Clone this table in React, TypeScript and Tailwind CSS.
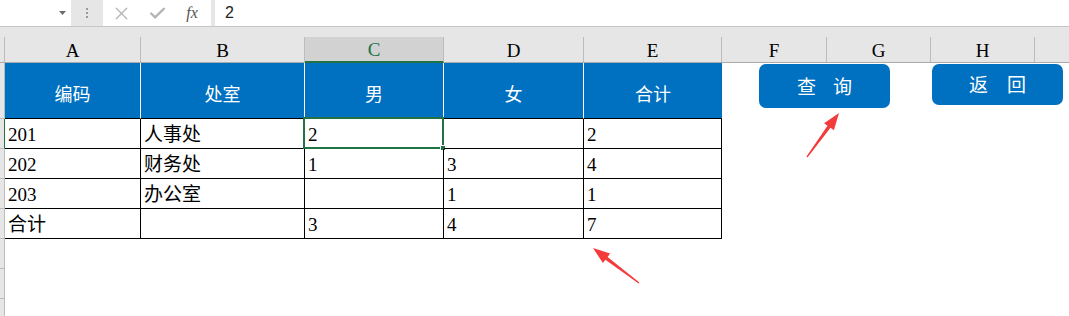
import React from 'react';
import { X, Check } from 'lucide-react';

const SERIF = "font-['Liberation_Serif','Noto_Sans_CJK_SC',serif]";

type Col = { key: string; w: string };

const COLS: Col[] = [
  { key: 'A', w: 'w-[136px]' },
  { key: 'B', w: 'w-[164px]' },
  { key: 'C', w: 'w-[139px]' },
  { key: 'D', w: 'w-[140px]' },
  { key: 'E', w: 'w-[138px]' },
  { key: 'F', w: 'w-[105px]' },
  { key: 'G', w: 'w-[104px]' },
  { key: 'H', w: 'w-[104px]' },
];

const HEAD = ['编码', '处室', '男', '女', '合计'];

const ROWS: string[][] = [
  ['201', '人事处', '2', '', '2'],
  ['202', '财务处', '1', '3', '4'],
  ['203', '办公室', '', '1', '1'],
  ['合计', '', '3', '4', '7'],
];

function FormulaBar() {
  return (
    <div className="flex h-[27px] bg-[#e6e6e6] border-b border-[#c6c6c6]">
      {/* name box */}
      <div className="w-[71px] bg-white flex items-center justify-end pr-[5px]">
        <svg width="7" height="4" viewBox="0 0 7 4">
          <path d="M0 0h7L3.5 4z" fill="#6b6b6b" />
        </svg>
      </div>
      <div className="w-[32px] flex flex-col items-center justify-center gap-[2px]">
        <span className="w-[2px] h-[2px] bg-[#9a9a9a]" />
        <span className="w-[2px] h-[2px] bg-[#9a9a9a]" />
        <span className="w-[2px] h-[2px] bg-[#9a9a9a]" />
      </div>
      <div className="w-[108px] bg-white flex items-center">
        <div className="w-[36px] flex justify-center">
          <X size={21} strokeWidth={1.5} color="#b4b4b4" />
        </div>
        <div className="w-[36px] flex justify-center">
          <Check size={19} strokeWidth={3} color="#b4b4b4" />
        </div>
        <div className="w-[36px] flex justify-center font-['Liberation_Serif',serif] italic text-[16px] text-[#555] pr-[2px]">
          fx
        </div>
      </div>
      <div className="w-[4px]" />
      <div className="flex-1 bg-white flex items-center pl-[10px] font-['Liberation_Sans',sans-serif] text-[16px] text-[#222]">
        2
      </div>
    </div>
  );
}

function ColumnHeader() {
  return (
    <div className={`flex h-[26px] bg-[#e6e6e6] border-b border-[#ababab] ${SERIF} text-[19px] text-black`}>
      <div className="w-[5px] border-r border-[#bcbcbc]" />
      {COLS.map((c) =>
        c.key === 'C' ? (
          <div
            key={c.key}
            className={`${c.w} flex items-center justify-center pt-[3px] bg-[#d2d2d2] text-[#217346] border-r border-[#bcbcbc] border-b-2 border-b-[#217346] -mb-px`}
          >
            {c.key}
          </div>
        ) : (
          <div key={c.key} className={`${c.w} flex items-center justify-center pt-[3px] border-r border-[#bcbcbc]`}>
            {c.key}
          </div>
        )
      )}
      <div className="flex-1" />
    </div>
  );
}

function Arrows() {
  return (
    <svg className="absolute left-0 top-0 pointer-events-none" width="1069" height="316" viewBox="0 0 1069 316">
      <polygon
        fill="#f43b3b"
        points="839,113 833.9,130.3 830.5,127.8 807.5,157.4 806.5,156.6 827.5,125.7 824.1,123.2"
      />
      <polygon
        fill="#f43b3b"
        points="593,248 610.1,253.5 607.6,256.9 639.4,282.5 638.6,283.5 605.4,259.7 602.9,263.1"
      />
    </svg>
  );
}

export default function App() {
  return (
    <div className="relative w-[1069px] h-[316px] overflow-hidden bg-white">
      <FormulaBar />
      <div className="h-[10px] bg-[#e6e6e6]" />
      <ColumnHeader />

      <div className="relative">
        {/* table header row */}
        <div className="flex h-[56px]">
          <div className="w-[5px] bg-[#e6e6e6] border-r border-b border-[#bcbcbc]" />
          {HEAD.map((h, i) => (
            <div
              key={h}
              className={`${COLS[i].w} bg-[#0070c0] border-b border-b-black ${i < 4 ? 'border-r border-r-white' : ''} flex items-center justify-center pt-[6px] font-['Noto_Sans_CJK_SC',sans-serif] text-[18px] text-white`}
            >
              {h}
            </div>
          ))}
        </div>

        {/* table body */}
        {ROWS.map((row, r) => (
          <div key={r} className="flex h-[30px]">
            <div
              className={`w-[5px] bg-[#e6e6e6] border-b border-[#bcbcbc] border-r ${r === 0 ? 'border-r-[#217346]' : 'border-r-[#bcbcbc]'}`}
            />
            {row.map((v, i) => (
              <div
                key={i}
                className={`${COLS[i].w} relative border-r border-b border-black flex items-end px-[3px] pb-[2px] leading-[22px] ${SERIF} text-[19px] text-black`}
              >
                {v}
                {r === 0 && i === 2 && (
                  <>
                    <div className="absolute -left-[2px] -top-[2px] -right-px -bottom-px border-2 border-[#217346]" />
                    <div className="absolute -right-[3px] -bottom-[3px] w-[6px] h-[6px] bg-[#217346] border border-white" />
                  </>
                )}
              </div>
            ))}
          </div>
        ))}

        {/* empty rows below the data */}
        {[0, 1, 2].map((k) => (
          <div key={k} className="flex h-[30px]">
            <div className="w-[5px] bg-[#e6e6e6] border-r border-b border-[#bcbcbc]" />
          </div>
        ))}

        {/* shape buttons floating over the sheet */}
        <button className="absolute left-[759px] top-px w-[131px] h-[44px] rounded-[7px] bg-[#0070c0] flex items-center justify-center gap-[17px] font-['Noto_Sans_CJK_SC',sans-serif] text-[19px] text-white">
          <span>查</span>
          <span>询</span>
        </button>
        <button className="absolute left-[932px] top-px w-[131px] h-[41px] rounded-[7px] bg-[#0070c0] flex items-center justify-center gap-[19px] font-['Noto_Sans_CJK_SC',sans-serif] text-[19px] text-white">
          <span>返</span>
          <span>回</span>
        </button>
      </div>

      <Arrows />
    </div>
  );
}
